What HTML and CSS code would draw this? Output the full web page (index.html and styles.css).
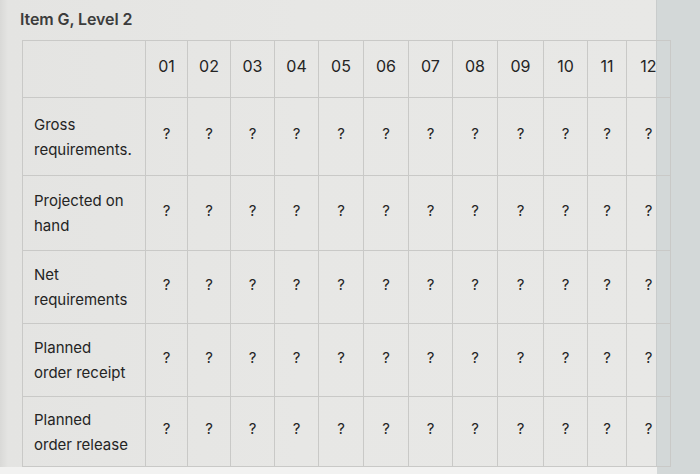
FILE: index.html
```html
<!DOCTYPE html>
<html>
<head>
<meta charset="utf-8">
<link rel="stylesheet" href="styles.css">
</head>
<body>
<div class="screen">
  <div class="sheet">
    <h1 class="title">Item G, Level 2</h1>
    <table class="mrp">
      <colgroup>
        <col style="width:123px"><col style="width:42px"><col style="width:43px"><col style="width:44px"><col style="width:44px"><col style="width:45px"><col style="width:45px"><col style="width:44px"><col style="width:45px"><col style="width:46px"><col style="width:44px"><col style="width:39px"><col style="width:44px">
      </colgroup>
      <tr class="head">
        <th></th><th>01</th><th>02</th><th>03</th><th>04</th><th>05</th><th>06</th><th>07</th><th>08</th><th>09</th><th>10</th><th>11</th><th>12</th>
      </tr>
      <tr class="r1">
        <td class="label">Gross<br>requirements.</td><td>?</td><td>?</td><td>?</td><td>?</td><td>?</td><td>?</td><td>?</td><td>?</td><td>?</td><td>?</td><td>?</td><td>?</td>
      </tr>
      <tr class="r2">
        <td class="label">Projected on<br>hand</td><td>?</td><td>?</td><td>?</td><td>?</td><td>?</td><td>?</td><td>?</td><td>?</td><td>?</td><td>?</td><td>?</td><td>?</td>
      </tr>
      <tr class="r3">
        <td class="label">Net<br>requirements</td><td>?</td><td>?</td><td>?</td><td>?</td><td>?</td><td>?</td><td>?</td><td>?</td><td>?</td><td>?</td><td>?</td><td>?</td>
      </tr>
      <tr class="r4">
        <td class="label">Planned<br>order receipt</td><td>?</td><td>?</td><td>?</td><td>?</td><td>?</td><td>?</td><td>?</td><td>?</td><td>?</td><td>?</td><td>?</td><td>?</td>
      </tr>
      <tr class="r5">
        <td class="label">Planned<br>order release</td><td>?</td><td>?</td><td>?</td><td>?</td><td>?</td><td>?</td><td>?</td><td>?</td><td>?</td><td>?</td><td>?</td><td>?</td>
      </tr>
    </table>
  </div>
  <div class="footer"></div>
</div>
</body>
</html>
```
FILE: styles.css
```css
html, body {
  margin: 0;
  padding: 0;
}
body {
  width: 700px;
  height: 474px;
  overflow: hidden;
  background: #d3d8d8;
  font-family: Inter, "Liberation Sans", Arial, sans-serif;
}
.screen {
  width: 700px;
  height: 474px;
  display: flex;
  flex-direction: column;
}
.sheet {
  width: 657px;
  height: 467px;
  padding-left: 22px;
  box-sizing: border-box;
  background: linear-gradient(90deg, #d9d9d7 0px, #e4e4e2 8px, #e7e7e5 300px, #e8e8e6 657px);
  border-right: 1px solid #c9cccc;
  overflow: visible;
}
.title {
  margin: 0 0 0 -2px;
  padding: 9px 0 0 0;
  height: 31px;
  box-sizing: border-box;
  font-size: 16px;
  line-height: 20px;
  font-weight: 600;
  color: #3c3c3c;
  letter-spacing: -0.1px;
}
.mrp {
  border-collapse: collapse;
  table-layout: fixed;
  width: 648px;
  margin-top: 9px;
  border: 1px solid #a8a8a8;
  color: #242424;
}
.mrp th, .mrp td {
  border: 1px solid #c9c9c7;
  padding: 0;
  text-align: center;
  vertical-align: middle;
  font-weight: 400;
}
.mrp th {
  font-size: 16px;
  padding-bottom: 6px;
}
.mrp td {
  font-size: 15px;
  padding-bottom: 6px;
}
.mrp td.label {
  text-align: left;
  padding-left: 11px;
  padding-bottom: 0;
  font-size: 15px;
  line-height: 25px;
}
.head { height: 57px; }
.r1 { height: 78px; }
.r2 { height: 75px; }
.r3 { height: 73px; }
.r4 { height: 73px; }
.r5 { height: 70px; }
.footer {
  flex: 1;
  width: 657px;
  background: #f2f2f1;
}
```
